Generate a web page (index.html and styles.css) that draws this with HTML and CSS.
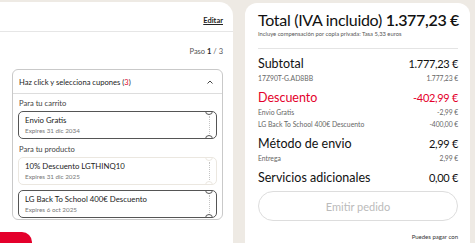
FILE: index.html
```html
<!DOCTYPE html>
<html>
<head>
  <title>Checkout</title>
  <link rel="stylesheet" href="styles.css">
</head>
<body>
  <div class="page">
    <div class="left-card">
      <div class="edit-row"><a href="#" class="edit-link">Editar</a></div>
      <div class="step">Paso <b>1</b> / 3</div>
      <div class="coupon-box">
        <div class="coupon-head">
          <span>Haz click y selecciona cupones (<span class="count">3</span>)</span>
          <svg class="chev" width="8" height="6" viewBox="0 0 8 6"><path d="M1.5 4.5 L4 2 L6.5 4.5" fill="none" stroke="#444" stroke-width="1"/></svg>
        </div>
        <div class="coupon-body">
          <div class="group-label">Para tu carrito</div>
          <div class="ticket">
            <div class="t-title">Envio Gratis</div>
            <div class="t-exp">Expires 31 dic 2034</div>
            <span class="tear"></span>
          </div>
          <div class="group-label">Para tu producto</div>
          <div class="ticket disabled">
            <div class="t-title">10% Descuento LGTHINQ10</div>
            <div class="t-exp">Expires 31 dic 2025</div>
            <span class="tear"></span>
          </div>
          <div class="ticket">
            <div class="t-title">LG Back To School 400€ Descuento</div>
            <div class="t-exp">Expires 6 oct 2025</div>
            <span class="tear"></span>
          </div>
        </div>
      </div>
      <div class="red-tab"></div>
    </div>

    <div class="right-card">
      <div class="total">Total (IVA incluido) <b>1.377,23 €</b></div>
      <div class="total-note">Incluye compensación por copia privada: Tasa 5,33 euros</div>
      <div class="sep"></div>
      <div class="row main"><span>Subtotal</span><span class="val">1.777,23 €</span></div>
      <div class="row sub"><span>17Z90T-G.AD8BB</span><span class="val">1.777,23 €</span></div>
      <div class="row main red"><span>Descuento</span><span class="val">-402,99 €</span></div>
      <div class="row sub"><span>Envio Gratis</span><span class="val">-2,99 €</span></div>
      <div class="row sub"><span>LG Back To School 400€ Descuento</span><span class="val">-400,00 €</span></div>
      <div class="row main"><span>Método de envio</span><span class="val">2,99 €</span></div>
      <div class="row sub"><span>Entrega</span><span class="val">2,99 €</span></div>
      <div class="row main"><span>Servicios adicionales</span><span class="val">0,00 €</span></div>
      <button class="order-btn">Emitir pedido</button>
      <div class="pay-note">Puedes pagar con</div>
    </div>
  </div>
</body>
</html>
```

FILE: styles.css
```css
body {
  margin: 0;
  background: #eeeae4;
  font-family: Lato, "Liberation Sans", sans-serif;
  color: #222;
}
.page {
  display: flex;
  align-items: flex-start;
  height: 243px;
  overflow: hidden;
}
.left-card {
  width: 233px;
  height: 260px;
  margin-top: 2px;
  background: #fff;
  border-radius: 0 14px 0 0;
  position: relative;
  flex-shrink: 0;
}
.edit-row {
  display: flex;
  justify-content: flex-end;
  padding: 14px 10px 0 0;
  height: 15px;
  border-bottom: 1px solid #e6e6e6;
}
.edit-link {
  font-size: 7.5px;
  font-weight: bold;
  color: #222;
  text-decoration: underline;
}
.step {
  text-align: right;
  padding: 15px 10px 0 0;
  font-size: 7.5px;
  color: #555;
}
.step b {
  color: #222;
}
.coupon-box {
  margin: 13px 10px 0 12px;
  border: 1px solid #c9c9c9;
  border-radius: 6px;
  height: 149px;
}
.coupon-head {
  display: flex;
  justify-content: space-between;
  align-items: center;
  padding: 0 8px 0 6px;
  height: 23px;
  border-bottom: 1px solid #ddd;
  font-size: 7.6px;
  color: #222;
}
.count {
  color: #e4002b;
}
.coupon-body {
  padding: 4px 5px 0 5px;
}
.group-label {
  font-size: 7.6px;
  line-height: 10px;
  color: #444;
  margin: 0 0 3px 1px;
}
.ticket {
  border: 1px solid #555;
  border-radius: 5px;
  height: 26px;
  padding: 0 0 0 6px;
  margin-bottom: 5px;
  position: relative;
  overflow: hidden;
  display: flex;
  flex-direction: column;
  justify-content: center;
}
.ticket::before,
.ticket::after {
  content: "";
  position: absolute;
  right: 3px;
  width: 6px;
  height: 6px;
  border: 1px solid #555;
  border-radius: 50%;
  background: #fff;
}
.ticket::before {
  top: -5px;
}
.ticket::after {
  bottom: -5px;
}
.tear {
  position: absolute;
  right: 6px;
  top: 4px;
  bottom: 4px;
  border-right: 1px dotted #c4c4c4;
}
.ticket.disabled,
.ticket.disabled::before,
.ticket.disabled::after {
  border-color: #ebe7e0;
}
.t-title {
  font-size: 7.8px;
  color: #222;
  line-height: 11px;
}
.t-exp {
  font-size: 6.3px;
  color: #777;
  line-height: 9px;
}
.red-tab {
  position: absolute;
  left: 0;
  top: 230px;
  width: 32px;
  height: 20px;
  background: #e4002b;
  border-radius: 0 10px 0 0;
}
.right-card {
  margin: 3px 0 0 12px;
  width: 225px;
  height: 260px;
  background: #fff;
  border-radius: 12px 12px 0 0;
  padding: 6px 12px 0 13px;
  box-sizing: border-box;
  flex-shrink: 0;
  white-space: nowrap;
}
.total {
  font-size: 16px;
  letter-spacing: -0.3px;
  line-height: 21px;
  color: #111;
}
.total b {
  font-weight: 600;
}
.total-note {
  font-size: 5.8px;
  line-height: 8px;
  color: #555;
}
.sep {
  border-top: 1px solid #e4e4e4;
  margin: 10px 0 7px;
}
.row {
  display: flex;
  justify-content: space-between;
  align-items: baseline;
}
.row.main {
  font-size: 12.5px;
  line-height: 16px;
  color: #111;
}
.row.main .val {
  font-size: 11px;
  letter-spacing: -0.3px;
}
.row.sub {
  font-size: 6.8px;
  line-height: 12px;
  color: #666;
}
.row.sub .val {
  letter-spacing: -0.1px;
}
.row.sub + .row.main {
  margin-top: 6px;
}
.row.red {
  color: #e4002b;
}
.order-btn {
  display: block;
  width: 100%;
  height: 30px;
  margin-top: 5px;
  border: 1px solid #ddd;
  border-radius: 16px;
  background: #fff;
  color: #bbb;
  font-family: inherit;
  font-size: 11px;
}
.pay-note {
  text-align: right;
  font-size: 6px;
  line-height: 8px;
  color: #333;
  margin-top: 12px;
}
```
